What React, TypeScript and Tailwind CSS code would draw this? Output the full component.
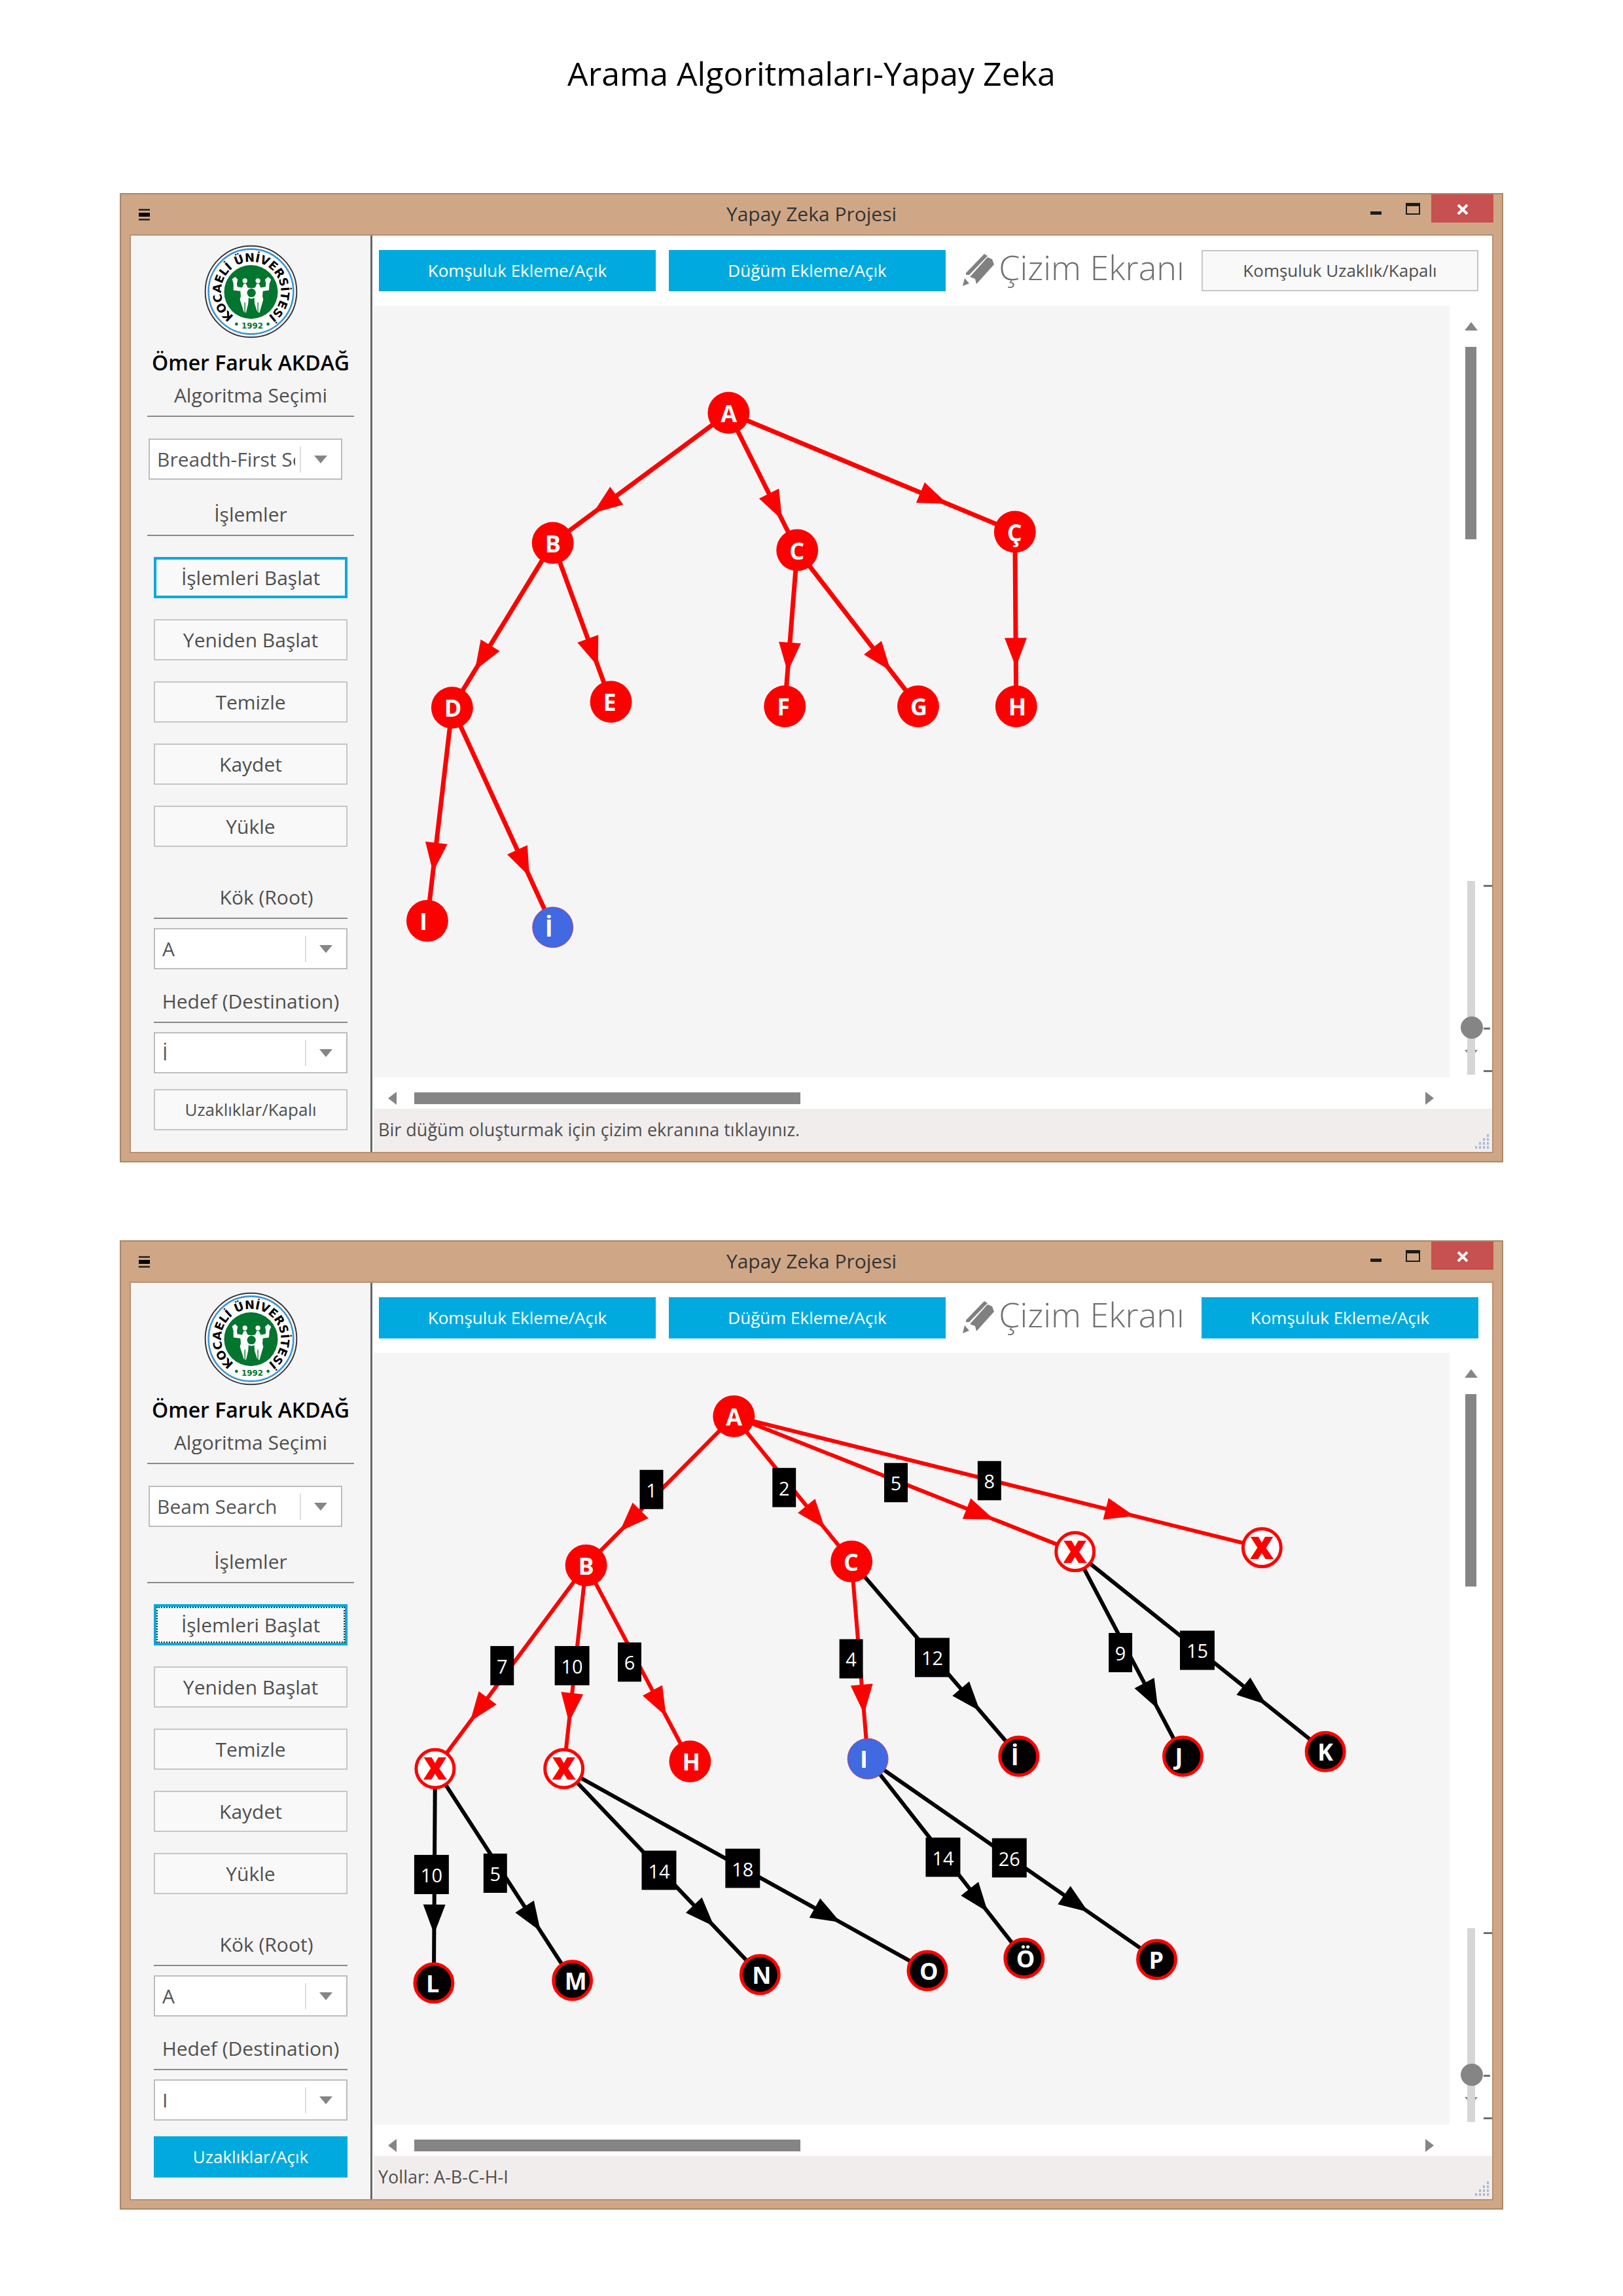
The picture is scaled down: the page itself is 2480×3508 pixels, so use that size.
import React, { useId } from "react";

type Point = { x: number; y: number };
type NodeKind = "visited" | "goal" | "pruned" | "idle";
type GraphNode = Point & { id: string; label: string; kind: NodeKind };
type Edge = { from: string; to: string; weight?: number; idle?: boolean };
type Graph = { nodes: GraphNode[]; edges: Edge[]; stroke: number };

const bfsGraph: Graph = {
  stroke: 7,
  nodes: [
    { id: "A", label: "A", x: 543, y: 164, kind: "visited" },
    { id: "B", label: "B", x: 274, y: 363, kind: "visited" },
    { id: "C", label: "C", x: 648, y: 374, kind: "visited" },
    { id: "Ç", label: "Ç", x: 981, y: 346, kind: "visited" },
    { id: "D", label: "D", x: 120, y: 615, kind: "visited" },
    { id: "E", label: "E", x: 363, y: 606, kind: "visited" },
    { id: "F", label: "F", x: 629, y: 613, kind: "visited" },
    { id: "G", label: "G", x: 833, y: 613, kind: "visited" },
    { id: "H", label: "H", x: 983, y: 613, kind: "visited" },
    { id: "I", label: "I", x: 82, y: 941, kind: "visited" },
    { id: "İ", label: "İ", x: 274, y: 951, kind: "goal" },
  ],
  edges: [
    { from: "A", to: "B" },
    { from: "A", to: "C" },
    { from: "A", to: "Ç" },
    { from: "B", to: "D" },
    { from: "B", to: "E" },
    { from: "C", to: "F" },
    { from: "C", to: "G" },
    { from: "Ç", to: "H" },
    { from: "D", to: "I" },
    { from: "D", to: "İ" },
  ],
};

const beamGraph: Graph = {
  stroke: 6,
  nodes: [
    { id: "A", label: "A", x: 551, y: 97, kind: "visited" },
    { id: "B", label: "B", x: 325, y: 325, kind: "visited" },
    { id: "C", label: "C", x: 731, y: 319, kind: "visited" },
    { id: "X1", label: "X", x: 94, y: 636, kind: "pruned" },
    { id: "X2", label: "X", x: 291, y: 636, kind: "pruned" },
    { id: "H", label: "H", x: 484, y: 625, kind: "visited" },
    { id: "I", label: "I", x: 756, y: 621, kind: "goal" },
    { id: "X3", label: "X", x: 1073, y: 304, kind: "pruned" },
    { id: "X4", label: "X", x: 1359, y: 298, kind: "pruned" },
    { id: "İ", label: "İ", x: 987, y: 617, kind: "idle" },
    { id: "J", label: "J", x: 1238, y: 617, kind: "idle" },
    { id: "K", label: "K", x: 1456, y: 610, kind: "idle" },
    { id: "L", label: "L", x: 92, y: 964, kind: "idle" },
    { id: "M", label: "M", x: 304, y: 960, kind: "idle" },
    { id: "N", label: "N", x: 591, y: 951, kind: "idle" },
    { id: "O", label: "O", x: 847, y: 945, kind: "idle" },
    { id: "Ö", label: "Ö", x: 995, y: 926, kind: "idle" },
    { id: "P", label: "P", x: 1198, y: 928, kind: "idle" },
  ],
  edges: [
    { from: "A", to: "B", weight: 1 },
    { from: "A", to: "C", weight: 2 },
    { from: "A", to: "X3", weight: 5 },
    { from: "A", to: "X4", weight: 8 },
    { from: "B", to: "X1", weight: 7 },
    { from: "B", to: "X2", weight: 10 },
    { from: "B", to: "H", weight: 6 },
    { from: "C", to: "I", weight: 4 },
    { from: "C", to: "İ", weight: 12, idle: true },
    { from: "X3", to: "J", weight: 9, idle: true },
    { from: "X3", to: "K", weight: 15, idle: true },
    { from: "X1", to: "L", weight: 10, idle: true },
    { from: "X1", to: "M", weight: 5, idle: true },
    { from: "X2", to: "N", weight: 14, idle: true },
    { from: "X2", to: "O", weight: 18, idle: true },
    { from: "I", to: "Ö", weight: 14, idle: true },
    { from: "I", to: "P", weight: 26, idle: true },
  ],
};

function arrowPoints(a: Point, b: Point) {
  const length = Math.hypot(b.x - a.x, b.y - a.y);
  const ux = (b.x - a.x) / length;
  const uy = (b.y - a.y) / length;
  const tip = 0.75 * length + 7;
  const base = tip - 45;
  const half = 17;
  const bx = a.x + ux * base;
  const by = a.y + uy * base;
  return [
    [a.x + ux * tip, a.y + uy * tip],
    [bx - uy * half, by + ux * half],
    [bx + uy * half, by - ux * half],
  ]
    .map((p) => p.join(","))
    .join(" ");
}

function NodeShape({ node }: { node: GraphNode }) {
  if (node.kind === "pruned") {
    return (
      <g>
        <circle cx={node.x} cy={node.y} r={29} strokeWidth={5} className="fill-white stroke-[#ff0000]" />
        <text
          x={node.x}
          y={node.y + 16}
          textAnchor="middle"
          strokeWidth={2}
          className="fill-[#ff0000] stroke-[#ff0000] text-[45px] font-extrabold"
        >
          {node.label}
        </text>
      </g>
    );
  }
  return (
    <g>
      {node.kind === "visited" && <circle cx={node.x} cy={node.y} r={32} className="fill-[#ff0000]" />}
      {node.kind === "goal" && (
        <circle cx={node.x} cy={node.y} r={31} strokeWidth={1} className="fill-[#4169e1] stroke-[#b0407c]" />
      )}
      {node.kind === "idle" && (
        <circle cx={node.x} cy={node.y} r={29} strokeWidth={5} className="fill-black stroke-[#ff0000]" />
      )}
      <text x={node.x - 12} y={node.y + 14} className="fill-white text-[36px] font-bold">
        {node.label}
      </text>
    </g>
  );
}

function GraphCanvas({ graph, title }: { graph: Graph; title: string }) {
  const byId = new Map(graph.nodes.map((n) => [n.id, n]));
  const lines = graph.edges.map((e) => ({ ...e, a: byId.get(e.from)!, b: byId.get(e.to)! }));
  return (
    <svg viewBox="0 0 1646 1180" role="img" aria-label={title} className="block min-w-0 flex-1 bg-[#f5f5f5]">
      {lines.map((e) => (
        <g key={e.from + e.to} className={e.idle ? "fill-black stroke-black" : "fill-[#ff0000] stroke-[#ff0000]"}>
          <line x1={e.a.x} y1={e.a.y} x2={e.b.x} y2={e.b.y} strokeWidth={graph.stroke} />
          <polygon points={arrowPoints(e.a, e.b)} strokeWidth={0} />
        </g>
      ))}
      {lines
        .filter((e) => e.weight !== undefined)
        .map((e) => {
          const wide = e.weight! > 9;
          const left = (e.a.x + e.b.x) / 2 - 31;
          const top = (e.a.y + e.b.y) / 2 - 32;
          const width = wide ? 53 : 36;
          return (
            <g key={"w" + e.from + e.to}>
              <rect x={left} y={top} width={width} height={60} className="fill-black" />
              <text x={left + width / 2} y={top + 42} textAnchor="middle" className="fill-white text-[29px]">
                {e.weight}
              </text>
            </g>
          );
        })}
      {graph.nodes.map((n) => (
        <NodeShape key={n.id} node={n} />
      ))}
    </svg>
  );
}

function UniversityLogo() {
  const ringId = useId();
  return (
    <svg viewBox="33 25 432 430" role="img" aria-label="Kocaeli Üniversitesi" className="h-[143px] w-[143px]">
      <circle cx="249" cy="240" r="211" fill="#fff" stroke="#3c3336" strokeWidth="6" />
      <circle cx="249" cy="240" r="196" fill="#fff" stroke="#3f95d6" strokeWidth="8" />
      <circle cx="249" cy="242" r="124" fill="#02752e" />
      <path id={ringId} d="M249 378 A138 138 0 1 1 250 378" fill="none" />
      <text className="fill-black font-['DejaVu_Sans',sans-serif] text-[54px] font-bold" textAnchor="middle">
        <textPath href={"#" + ringId} startOffset="50%">
          KOCAELİ ÜNİVERSİTESİ
        </textPath>
      </text>
      <text
        x="255"
        y="412"
        textAnchor="middle"
        className="fill-[#02752e] font-['DejaVu_Sans',sans-serif] text-[36px] font-bold"
      >
        1992
      </text>
      <circle cx="182" cy="390" r="7" fill="#02752e" />
      <circle cx="328" cy="390" r="7" fill="#02752e" />
      <g fill="#fff">
        <circle cx="221" cy="190" r="11" />
        <circle cx="281" cy="190" r="11" />
        <path d="M162 182 L176 172 L188 184 L184 204 L186 218 L208 222 L216 204 L226 204 L234 222 L251 224 L268 222 L276 204 L286 204 L294 222 L316 218 L318 204 L314 184 L328 172 L342 184 L334 204 L332 234 L304 238 L302 262 L306 276 L288 338 L278 334 L266 296 L264 268 Q251 278 238 268 L236 296 L226 338 L216 334 L198 276 L202 262 L200 238 L168 234 L168 204 Z" />
      </g>
      <circle cx="251" cy="246" r="20" fill="#02752e" />
      <g stroke="#02752e" strokeWidth="4">
        <line x1="221" y1="290" x2="221" y2="340" />
        <line x1="281" y1="290" x2="281" y2="340" />
      </g>
    </svg>
  );
}

function PencilIcon() {
  return (
    <svg viewBox="0 0 49 50" aria-hidden="true" className="mt-[6px] h-[50px] w-[49px] fill-[#808080]">
      <polygon points="38,5 45,8 48,16 21,46 19,38 11,35" />
      <polygon points="33,0 38,3 10,32 5,32 5,29" />
      <polygon points="3,37 10,45 0,49" />
    </svg>
  );
}

function Triangle({ direction }: { direction: "up" | "down" | "left" | "right" }) {
  const shapes = {
    up: { points: "0,13 10,0 20,13", box: "0 0 20 13", size: "h-[13px] w-[20px]" },
    down: { points: "0,0 20,0 10,12", box: "0 0 20 12", size: "h-[12px] w-[20px]" },
    left: { points: "13,0 13,20 0,10", box: "0 0 13 20", size: "h-[20px] w-[13px]" },
    right: { points: "0,0 13,10 0,20", box: "0 0 13 20", size: "h-[20px] w-[13px]" },
  };
  const s = shapes[direction];
  return (
    <svg viewBox={s.box} aria-hidden="true" className={"block fill-[#858585] " + s.size}>
      <polygon points={s.points} />
    </svg>
  );
}

function SelectBox({ id, value }: { id: string; value: string }) {
  return (
    <div className="relative h-[63px] w-[296px]">
      <select
        id={id}
        defaultValue={value}
        className="block h-full w-full appearance-none rounded-none border-2 border-[#bdbdbd] bg-white pr-[70px] pl-[11px] text-[30px] text-[#555]"
      >
        <option>{value}</option>
      </select>
      <span className="pointer-events-none absolute inset-y-0 right-0 flex w-[65px] items-center">
        <span className="h-[40px] w-[2px] bg-[#dedede]" />
        <span className="ml-[20px]">
          <Triangle direction="down" />
        </span>
      </span>
    </div>
  );
}

function SideButton({ children, tone = "plain" }: { children: React.ReactNode; tone?: "plain" | "active" | "focused" }) {
  const tones = {
    plain: "border-2 border-[#c6c6c6]",
    active: "border-4 border-[#00aade]",
    focused: "border-4 border-[#00aade] outline-2 -outline-offset-6 outline-dotted outline-[#333]",
  };
  return (
    <button type="button" className={"h-[63px] w-full bg-[#f9f9f9] text-[30px] text-[#4f4f4f] " + tones[tone]}>
      {children}
    </button>
  );
}

function ToggleButton({ on, children }: { on: boolean; children: React.ReactNode }) {
  return (
    <button
      type="button"
      aria-pressed={on}
      className={
        "h-[63px] w-full text-[26px] " +
        (on ? "bg-[#00aade] font-medium text-white" : "border-2 border-[#c6c6c6] bg-[#f9f9f9] text-[#4f4f4f]")
      }
    >
      {children}
    </button>
  );
}

type WindowProps = {
  graph: Graph;
  algorithm: string;
  goal: string;
  distances: { on: boolean; label: string };
  edgeToggle: { on: boolean; label: string };
  startFocused: boolean;
  status: string;
};

function AppWindow({ graph, algorithm, goal, distances, edgeToggle, startFocused, status }: WindowProps) {
  const id = useId();
  return (
    <section className="border-2 border-[#a98768] bg-[#cfa786] px-[13px] pb-[12px]">
      <header className="grid h-[61px] grid-cols-[1fr_auto_1fr]">
        <span className="ml-[14px] flex items-center">
          <svg viewBox="0 0 17 18" aria-hidden="true" className="h-[18px] w-[17px]">
            <path d="M0 1.5H17M0 16.5H17" stroke="#222" strokeWidth="2.4" />
            <path d="M0 9H17" stroke="#000" strokeWidth="6" />
          </svg>
        </span>
        <h2 className="text-[30px] leading-[60px] text-[#333]">Yapay Zeka Projesi</h2>
        <div className="flex items-start justify-end">
          <button type="button" aria-label="Simge durumuna küçült" className="flex h-[43px] w-[55px] items-center justify-center">
            <span className="mt-[13px] h-[5px] w-[17px] bg-[#1c1c1c]" />
          </button>
          <button type="button" aria-label="Ekranı kapla" className="flex h-[43px] w-[57px] items-center justify-center">
            <span className="h-[18px] w-[22px] border-2 border-t-[5px] border-[#1c1c1c]" />
          </button>
          <button type="button" aria-label="Kapat" className="flex h-[43px] w-[95px] items-center justify-center bg-[#c75050]">
            <svg viewBox="0 0 18 16" aria-hidden="true" className="mt-[3px] h-[16px] w-[18px]">
              <path d="M2 1L16 15M16 1L2 15" stroke="#fff" strokeWidth="4" />
            </svg>
          </button>
        </div>
      </header>

      <div className="flex border-2 border-[#b98f6e] bg-white">
        <aside className="flex w-[366px] shrink-0 flex-col bg-[#f5f5f5] px-[25px] pt-[14px] pb-[33px] text-[#4f4f4f]">
          <div className="flex justify-center">
            <UniversityLogo />
          </div>
          <p className="mt-[12px] text-center text-[32px] leading-[50px] font-semibold whitespace-nowrap text-black">
            Ömer Faruk AKDAĞ
          </p>
          <label htmlFor={id + "algo"} className="border-b-2 border-[#8a8a8a] pb-[6px] text-center text-[30px] leading-[50px]">
            Algoritma Seçimi
          </label>
          <div className="mt-[33px] ml-[2px]">
            <SelectBox id={id + "algo"} value={algorithm} />
          </div>
          <h3 className="mt-[28px] border-b-2 border-[#8a8a8a] pb-[6px] text-center text-[30px] leading-[50px]">İşlemler</h3>

          <div className="mx-[10px] mt-[32px] flex flex-col gap-[32px]">
            <SideButton tone={startFocused ? "focused" : "active"}>İşlemleri Başlat</SideButton>
            <SideButton>Yeniden Başlat</SideButton>
            <SideButton>Temizle</SideButton>
            <SideButton>Kaydet</SideButton>
            <SideButton>Yükle</SideButton>
          </div>

          <div className="mx-[10px] mt-[52px] flex flex-col">
            <label
              htmlFor={id + "root"}
              className="border-b-2 border-[#8a8a8a] pb-[6px] pl-[48px] text-center text-[30px] leading-[50px] whitespace-nowrap"
            >
              Kök (Root)
            </label>
            <div className="mt-[14px]">
              <SelectBox id={id + "root"} value="A" />
            </div>
            <label
              htmlFor={id + "goal"}
              className="mt-[24px] flex justify-center border-b-2 border-[#8a8a8a] pb-[6px] text-[30px] leading-[50px] whitespace-nowrap"
            >
              Hedef (Destination)
            </label>
            <div className="mt-[14px] mb-[24px]">
              <SelectBox id={id + "goal"} value={goal} />
            </div>
            <ToggleButton on={distances.on}>{distances.label}</ToggleButton>
          </div>
        </aside>

        <div className="flex min-w-0 flex-1 flex-col border-l-[3px] border-[#666]">
          <div className="flex gap-[20px] pt-[22px] pr-[21px] pb-[22px] pl-[10px]">
            <div className="w-[423px]">
              <ToggleButton on>Komşuluk Ekleme/Açık</ToggleButton>
            </div>
            <div className="w-[423px]">
              <ToggleButton on>Düğüm Ekleme/Açık</ToggleButton>
            </div>
            <div className="flex min-w-0 flex-1 items-start justify-center gap-[6px]">
              <PencilIcon />
              <h3 className="text-[52px] leading-[52px] font-light whitespace-nowrap text-[#707070]">Çizim Ekranı</h3>
            </div>
            <div className="w-[423px]">
              <ToggleButton on={edgeToggle.on}>{edgeToggle.label}</ToggleButton>
            </div>
          </div>

          <div className="flex pl-[2px]">
            <GraphCanvas graph={graph} title={algorithm} />
            <div className="relative flex w-[65px] flex-col items-center pt-[25px] pb-[30px]">
              <Triangle direction="up" />
              <div className="mt-[25px] h-[294px] w-[17px] bg-[#858585]" />
              <div className="mt-auto">
                <Triangle direction="down" />
              </div>
              <div className="absolute right-0 bottom-[4px] flex h-[296px] w-[38px]">
                <input
                  type="range"
                  aria-label="Yakınlaştırma"
                  min={0}
                  max={100}
                  defaultValue={21}
                  className="h-full w-[12px] appearance-none bg-[#d6d6d6] [direction:rtl] [writing-mode:vertical-lr] [&::-webkit-slider-thumb]:ml-[2px] [&::-webkit-slider-thumb]:h-[34px] [&::-webkit-slider-thumb]:w-[34px] [&::-webkit-slider-thumb]:appearance-none [&::-webkit-slider-thumb]:rounded-full [&::-webkit-slider-thumb]:bg-[#858585]"
                />
                <div className="ml-auto flex w-[13px] flex-col pt-[6px]">
                  <span className="h-[3px] bg-[#707070]" />
                  <span className="mt-[215px] mr-[3px] h-[3px] bg-[#707070]" />
                  <span className="mt-[62px] h-[3px] bg-[#707070]" />
                </div>
              </div>
            </div>
          </div>

          <div className="flex h-[48px] items-center pt-[16px] pr-[89px] pl-[24px]">
            <Triangle direction="left" />
            <div className="ml-[27px] h-[18px] w-[590px] bg-[#858585]" />
            <div className="ml-auto">
              <Triangle direction="right" />
            </div>
          </div>

          <footer className="ml-[2px] flex flex-1 items-end justify-between bg-[#f1eded] pr-[4px] pb-[4px] pl-[7px]">
            <p className="text-[27px] leading-[60px] text-[#4f4f4f]">{status}</p>
            <svg viewBox="0 0 24 24" aria-hidden="true" className="h-[24px] w-[24px] fill-[#a9b9d2]">
              {[0, 1, 2, 3].flatMap((row) =>
                Array.from({ length: row + 1 }, (_, i) => (
                  <rect key={row + "-" + i} x={20 - i * 6} y={row * 6 + 1} width={3} height={4} />
                )),
              )}
            </svg>
          </footer>
        </div>
      </div>
    </section>
  );
}

export default function App() {
  return (
    <main className="min-h-screen bg-white px-[183px] pt-[82px] pb-[120px] font-['Open_Sans',sans-serif]">
      <h1 className="text-center text-[50px] leading-[60px] text-black">Arama Algoritmaları-Yapay Zeka</h1>
      <div className="mt-[153px] flex flex-col gap-[119px]">
        <AppWindow
          graph={bfsGraph}
          algorithm="Breadth-First Search"
          goal="İ"
          distances={{ on: false, label: "Uzaklıklar/Kapalı" }}
          edgeToggle={{ on: false, label: "Komşuluk Uzaklık/Kapalı" }}
          startFocused={false}
          status="Bir düğüm oluşturmak için çizim ekranına tıklayınız."
        />
        <AppWindow
          graph={beamGraph}
          algorithm="Beam Search"
          goal="I"
          distances={{ on: true, label: "Uzaklıklar/Açık" }}
          edgeToggle={{ on: true, label: "Komşuluk Ekleme/Açık" }}
          startFocused
          status="Yollar: A-B-C-H-I"
        />
      </div>
    </main>
  );
}
